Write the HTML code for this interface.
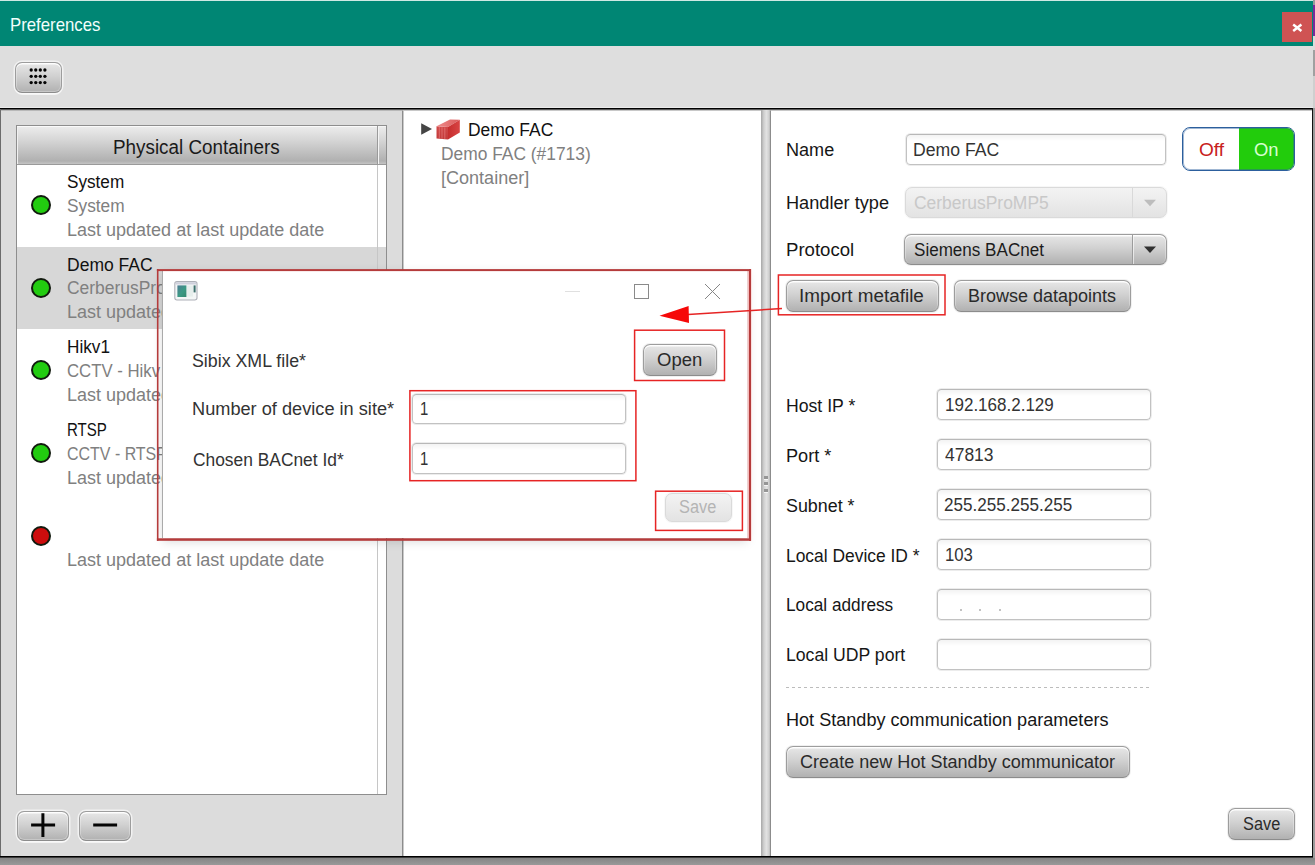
<!DOCTYPE html>
<html><head><meta charset="utf-8"><title>Preferences</title>
<style>
html,body{margin:0;padding:0;width:1315px;height:865px;overflow:hidden;background:#dedede;font-family:"Liberation Sans",sans-serif;}
body{position:relative}
div,span,svg{position:absolute;box-sizing:border-box}
.t{line-height:1;white-space:nowrap;transform-origin:0 0;z-index:5}
#topline{left:0;top:0;width:1313px;height:1px;background:#cfe9e4}
#title{left:0;top:1px;width:1313px;height:45px;background:#008674}
#close{left:1282px;top:12px;width:30px;height:30px;background:#cf5353}
#edgeR{left:1313px;top:0;width:2px;height:865px;background:#9a9a9a}
#edgeR1{left:1313px;top:5px;width:2px;height:31px;background:#7a2a9a}
#edgeR2{left:1313px;top:36px;width:2px;height:14px;background:#dcdcdc}
#edgeR3{left:1313px;top:50px;width:2px;height:26px;background:#a0a0a0}
#edgeR4{left:1313px;top:76px;width:2px;height:32px;background:#cfcfcf}
#hl107{left:0;top:107px;width:1313px;height:1px;background:#ececec}
#bl108{left:0;top:108px;width:1313px;height:1px;background:#000}
#bl109{left:0;top:109px;width:1313px;height:1px;background:#5a5a5a}
#bl110{left:0;top:110px;width:1313px;height:1px;background:#b8b8b8}
#leftbg{left:0;top:111px;width:402px;height:745px;background:#dcdcdc}
#edgeL{left:0;top:109px;width:1px;height:748px;background:#6c6c6c}
#edgeRb{left:1312px;top:108px;width:1px;height:749px;background:#111}
#botline{left:0;top:856px;width:1313px;height:1px;background:#000}
#botline2{left:0;top:857px;width:1313px;height:1px;background:#3c3c3c}
#botbg{left:0;top:858px;width:1315px;height:7px;background:linear-gradient(#858585,#999)}
/* modena-like button */
.btn{border:1px solid #9d9d9d;border-bottom-color:#8c8c8c;border-radius:7px;background:linear-gradient(#e7e7e7 0%,#d1d1d1 45%,#b1b1b1 100%);box-shadow:0 0 0 1px rgba(150,150,150,.14), inset 0 -1px 0 0 rgba(0,0,0,.10), inset 0 1.5px 0 0 rgba(255,255,255,.92), inset 0 0 0 1px rgba(255,255,255,.28)}
.btn.ong{box-shadow:0 0 0 1.5px rgba(255,255,255,.62), 0 2px 0 0 rgba(255,255,255,.5), inset 0 1.5px 0 0 rgba(255,255,255,.92), inset 0 0 0 1px rgba(255,255,255,.28)}
.btn.dis{border-color:#dadada;background:linear-gradient(#f3f3f3,#e3e3e3);box-shadow:0 0 0 1px rgba(200,200,200,.15)}
.fld{border:1px solid #c2c2c2;border-top-color:#b8b8b8;border-radius:4.5px;background:linear-gradient(#f3f3f3 0,#fff 6px);box-shadow:0 0 0 1px rgba(170,170,170,.22)}
#list{left:16px;top:125px;width:371px;height:670px;border:1px solid #8e8e8e;background:#fff}
#lhead{left:0;top:0;width:369px;height:38.5px;background:linear-gradient(#ededed 0%,#d4d4d4 40%,#b0b0b0 92%,#c4c4c4 100%);border-bottom:1px solid #9a9a9a;box-shadow:inset 0 1px 0 #fafafa, inset 1px 0 0 #f0f0f0}
#lcorner{left:360px;top:0;width:9px;height:38px;border-left:1px solid #9a9a9a;background:linear-gradient(#ededed 0%,#d4d4d4 40%,#b0b0b0 92%,#c4c4c4 100%);box-shadow:inset 1px 1px 0 #f4f4f4}
#lsel{left:0;top:120.6px;width:369px;height:82.7px;background:#d7d7d7}
#lsb{left:360px;top:38px;width:9px;height:630px;background:transparent;border-left:1px solid #c6c6c6}
.dot{width:20px;height:20px;border-radius:50%;border:2px solid #111a0e;left:30.4px}
.g{background:#22cc10}.r{background:#cc0d0d}
#mid{left:402px;top:110px;width:359px;height:746px;background:#fff;border-left:1px solid #8c8c8c;border-top:1px solid #c8c8c8;box-shadow:inset 1px 0 0 #cacaca}
#split{left:761px;top:110px;width:9px;height:746px;background:linear-gradient(90deg,#a8a8a8 0,#b4b4b4 11%,#cecece 30%,#e2e2e2 60%,#d2d2d2 85%,#bcbcbc 100%)}
#right{left:770px;top:110px;width:542px;height:746px;background:#fff;border-left:1px solid #8c8c8c;border-top:1px solid #c8c8c8}
.grip{left:764px;width:4px;height:3px;background:#969696;box-shadow:0 1px 0 rgba(255,255,255,.7)}
#dash{left:786px;top:687.3px;width:364px;height:1px;background:repeating-linear-gradient(90deg,#bcbcbc 0,#bcbcbc 3.2px,transparent 3.2px,transparent 6px)}
#toggle{left:1182px;top:127px;width:113px;height:44px;border:1px solid #2c5f9d;border-radius:8px;background:#fff;overflow:hidden}
#toggle b{position:absolute;left:0;top:0;width:111px;height:42px;border-radius:7px;box-shadow:inset 0 0 0 1px rgba(44,95,157,.45);display:block}
#toggle i{position:absolute;left:56px;top:0;width:56px;height:42px;background:#22cc0c;display:block}
.sep{width:1px}
/* dialog */
#dshadow{left:164px;top:273px;width:582px;height:265px;box-shadow:0 2px 10px 1px rgba(0,0,0,.17);z-index:19}
#dlg{left:162px;top:271px;width:586px;height:267px;background:#fff;box-shadow:inset 1px 0 0 #aaa, inset -1px 0 0 #e8dada;z-index:20}
#anno{left:0;top:0;width:1315px;height:865px;z-index:25;pointer-events:none}
.z30{z-index:30}

</style></head>
<body>
<div id="topline"></div><div id="title"></div>
<div id="close"><svg width="30" height="30" viewBox="0 0 30 30" style="left:0;top:0"><path d="M11.2 12.6 L19.4 18.9 M19.4 12.6 L11.2 18.9" stroke="#fff" stroke-width="2.5" fill="none"/></svg></div>
<div id="edgeR"></div><div id="edgeR1"></div><div id="edgeR2"></div><div id="edgeR3"></div><div id="edgeR4"></div>
<div class="btn ong" style="left:15px;top:62px;width:47px;height:31px"></div>
<svg width="20" height="18" viewBox="0 0 20 18" style="left:29px;top:67px;z-index:3"><g fill="#050505">
<circle cx="2.2" cy="3" r="1.65"/><circle cx="6.75" cy="3" r="1.65"/><circle cx="11.3" cy="3" r="1.65"/><circle cx="15.9" cy="3" r="1.65"/>
<circle cx="2.2" cy="9.3" r="1.65"/><circle cx="6.75" cy="9.3" r="1.65"/><circle cx="11.3" cy="9.3" r="1.65"/><circle cx="15.9" cy="9.3" r="1.65"/>
<circle cx="2.2" cy="15.6" r="1.65"/><circle cx="6.75" cy="15.6" r="1.65"/><circle cx="11.3" cy="15.6" r="1.65"/><circle cx="15.9" cy="15.6" r="1.65"/></g></svg>
<div id="hl107"></div><div id="bl108"></div><div id="bl109"></div><div id="bl110"></div>
<div id="leftbg"></div><div id="edgeL"></div>
<div id="list">
 <div id="lsel"></div>
 <div id="lsb"></div>
 <div id="lhead"></div><div id="lcorner"></div>
 <div class="dot g" style="top:69.0px;left:13.8px"></div>
 <div class="dot g" style="top:151.7px;left:13.8px"></div>
 <div class="dot g" style="top:234.3px;left:13.8px"></div>
 <div class="dot g" style="top:317.0px;left:13.8px"></div>
 <div class="dot r" style="top:399.7px;left:13.8px"></div>
</div>
<div class="btn ong" style="left:17px;top:811px;width:52px;height:30px"></div>
<div class="btn ong" style="left:79px;top:811px;width:52px;height:30px"></div>
<svg width="120" height="30" viewBox="0 0 120 30" style="left:16px;top:810px;z-index:3"><path d="M15.1 15.1 H39.1 M26.9 3.2 V27 M77.2 15.1 H101.1" stroke="#050505" stroke-width="3" fill="none"/></svg>
<div id="mid"></div><div id="split"></div><div id="right"></div>
<div class="grip" style="top:476px"></div><div class="grip" style="top:482px"></div><div class="grip" style="top:489px"></div>
<div id="edgeRb"></div>
<div id="botline"></div><div id="botline2"></div><div id="botbg"></div>
<!-- tree -->
<svg width="46" height="26" viewBox="0 0 46 26" style="left:418px;top:116px;z-index:3">
 <defs><linearGradient id="ct" x1="0" y1="0" x2="1" y2="0"><stop offset="0" stop-color="#f08c8c"/><stop offset="1" stop-color="#d95a5a"/></linearGradient>
 <linearGradient id="cs" x1="0" y1="0" x2="1" y2="0"><stop offset="0" stop-color="#c62e2e"/><stop offset="1" stop-color="#d84444"/></linearGradient>
 <linearGradient id="cf" x1="0" y1="0" x2="0" y2="1"><stop offset="0" stop-color="#d24848"/><stop offset="1" stop-color="#c23a3a"/></linearGradient></defs>
 <path d="M3.2 7.2 L14 13 L3.2 18.8 Z" fill="#454545"/>
 <path d="M18.5 10.3 L30 11 L30 23.4 L18.5 22.6 Z" fill="url(#cf)"/>
 <path d="M18.5 10.3 L32 3.6 L41.8 3.8 L30 11 Z" fill="url(#ct)"/>
 <path d="M30 11 L41.8 3.8 L41.8 16.6 L30 23.4 Z" fill="url(#cs)"/>
 <path d="M21.3 11 V22.5 M24 11.2 V22.8 M26.8 11.4 V23" stroke="#e88080" stroke-width=".9" opacity=".75"/>
</svg>
<!-- right controls -->
<div class="fld" style="left:905.5px;top:134px;width:260px;height:31px"></div>
<div id="toggle"><i></i><b></b></div>
<div class="btn dis" style="left:904.5px;top:187px;width:262px;height:31px"></div>
<div class="sep" style="left:1132px;top:188px;height:29px;background:#d9d9d9"></div>
<svg width="14" height="8" viewBox="0 0 14 8" style="left:1142.5px;top:199px"><path d="M1 .8 H13 L7 7.2 Z" fill="#bdbdbd"/></svg>
<div class="btn" style="left:904px;top:233.5px;width:262.5px;height:31px"></div>
<div class="sep" style="left:1131.5px;top:235px;height:28.5px;background:#9c9c9c;box-shadow:1px 0 0 rgba(255,255,255,.6)"></div>
<svg width="14" height="8" viewBox="0 0 14 8" style="left:1142.5px;top:246px"><path d="M1 .4 H13 L7 7 Z" fill="#303030"/></svg>
<div class="btn" style="left:786px;top:280px;width:152.5px;height:31.5px"></div>
<div class="btn" style="left:954px;top:280px;width:176.5px;height:31.5px"></div>
<div class="fld" style="left:936.5px;top:389px;width:214.5px;height:31px"></div>
<div class="fld" style="left:936.5px;top:439px;width:214.5px;height:31px"></div>
<div class="fld" style="left:936.5px;top:489px;width:214.5px;height:31px"></div>
<div class="fld" style="left:936.5px;top:539px;width:214.5px;height:31px"></div>
<div class="fld" style="left:936.5px;top:589px;width:214.5px;height:31px"></div>
<div class="fld" style="left:936.5px;top:639px;width:214.5px;height:31px"></div>
<div style="left:960px;top:609px;width:2px;height:2px;background:#c2c2c2"></div>
<div style="left:979px;top:609px;width:2px;height:2px;background:#c2c2c2"></div>
<div style="left:998.5px;top:609px;width:2px;height:2px;background:#c2c2c2"></div>
<div id="dash"></div>
<div class="btn" style="left:786px;top:746px;width:343.5px;height:31.5px"></div>
<div class="btn" style="left:1228px;top:808px;width:67px;height:31.5px"></div>
<!-- dialog -->
<div id="dshadow"></div>
<div id="dlg">
 <svg width="24" height="20" viewBox="0 0 24 20" style="left:11.5px;top:10px">
  <defs><linearGradient id="tg" x1="0" y1="0" x2="1" y2="1"><stop offset="0" stop-color="#4d7b93"/><stop offset=".55" stop-color="#3b9a84"/><stop offset="1" stop-color="#35886f"/></linearGradient></defs>
  <rect x=".8" y=".6" width="22.2" height="18.4" rx="2.2" fill="#f3f6f6" stroke="#aeb0b8" stroke-width="1.1"/>
  <rect x="1.6" y="1.3" width="20.6" height="2.2" fill="#cfd0dc"/>
  <rect x="3.4" y="4.4" width="9" height="11.6" fill="url(#tg)"/>
  <rect x="13" y="4.6" width="6" height="11" fill="#e6eeec"/>
  <rect x="19.6" y="4.4" width="2" height="7" fill="#3c6f6c"/>
 </svg>
 <div style="left:403px;top:20px;width:15px;height:1px;background:#e0e0e0"></div>
 <div style="left:472px;top:13px;width:15px;height:15px;border:1px solid #8a8a8a"></div>
 <svg width="17" height="17" viewBox="0 0 17 17" style="left:541.5px;top:12px"><path d="M1 1 L16 16 M16 1 L1 16" stroke="#868686" stroke-width="1" fill="none"/></svg>
 <div class="btn" style="left:481px;top:73px;width:74px;height:31.5px"></div>
 <div class="fld" style="left:250px;top:122.5px;width:214px;height:30.5px"></div>
 <div class="fld" style="left:250px;top:172px;width:214px;height:31px"></div>
 <div class="btn dis" style="left:503px;top:222px;width:67px;height:29px"></div>
</div>
<svg id="anno" width="1315" height="865" viewBox="0 0 1315 865">
 <rect x="747.7" y="271" width="1.4" height="267.3" fill="#f4bcbc"/><rect x="751" y="269.1" width="1" height="271.7" fill="#fbe0e0"/><g fill="#b53b3b"><rect x="156.9" y="269.1" width="594.1" height="2"/><rect x="156.9" y="269.1" width="1.6" height="271.7"/><rect x="749" y="269.1" width="2" height="271.7"/><rect x="156.9" y="538.3" width="594.1" height="2.5"/></g>
 <g fill="none" stroke="#e62424" stroke-width="1.5">
  <rect x="634.6" y="330.2" width="89.9" height="50.3"/>
  <rect x="409.9" y="390.7" width="226" height="90"/>
  <rect x="655.6" y="491.2" width="86.8" height="39.2"/>
  <rect x="778.4" y="275" width="166.6" height="39.8"/>
  <path d="M782 308.5 L688 314.6"/>
 </g>
 <path d="M659.5 315.8 L688.6 306 L689 323 Z" fill="#f60808"/>
</svg>

<span class="t" style="left:9.81px;top:16.00px;font-size:18.5px;color:#f2fffc;transform:scaleX(0.9066);">Preferences</span>
<span class="t" style="left:113.33px;top:138.00px;font-size:19.5px;color:#1a1a1a;transform:scaleX(0.9667);">Physical Containers</span>
<span class="t" style="left:67.05px;top:174.00px;font-size:17.5px;color:#111;transform:scaleX(0.9800);">System</span>
<span class="t" style="left:66.64px;top:198.00px;font-size:17.5px;color:#808080;transform:scaleX(0.9871);">System</span>
<span class="t" style="left:66.78px;top:222.00px;font-size:17.5px;color:#808080;transform:scaleX(1.0290);">Last updated at last update date</span>
<span class="t" style="left:66.72px;top:257.00px;font-size:17.5px;color:#111;transform:scaleX(1.0008);">Demo FAC</span>
<span class="t" style="left:66.71px;top:280.00px;font-size:17.5px;color:#808080;transform:scaleX(0.9966);">CerberusProMP5</span>
<span class="t" style="left:66.78px;top:304.00px;font-size:17.5px;color:#808080;transform:scaleX(1.0290);">Last updated at last update date</span>
<span class="t" style="left:66.75px;top:339.00px;font-size:17.5px;color:#111;transform:scaleX(0.9810);">Hikv1</span>
<span class="t" style="left:66.76px;top:363.00px;font-size:17.5px;color:#808080;transform:scaleX(0.9570);">CCTV - Hikv</span>
<span class="t" style="left:66.78px;top:387.00px;font-size:17.5px;color:#808080;transform:scaleX(1.0290);">Last updated at last update date</span>
<span class="t" style="left:66.93px;top:422.00px;font-size:17.5px;color:#111;transform:scaleX(0.8602);">RTSP</span>
<span class="t" style="left:66.81px;top:446.00px;font-size:17.5px;color:#808080;transform:scaleX(0.9121);">CCTV - RTSP</span>
<span class="t" style="left:66.78px;top:470.00px;font-size:17.5px;color:#808080;transform:scaleX(1.0290);">Last updated at last update date</span>
<span class="t" style="left:66.78px;top:552.00px;font-size:17.5px;color:#808080;transform:scaleX(1.0290);">Last updated at last update date</span>
<span class="t" style="left:467.93px;top:122.00px;font-size:17.5px;color:#111;transform:scaleX(0.9960);">Demo FAC</span>
<span class="t" style="left:441.14px;top:146.00px;font-size:17.5px;color:#808080;transform:scaleX(0.9933);">Demo FAC (#1713)</span>
<span class="t" style="left:441.24px;top:170.00px;font-size:17.5px;color:#808080;transform:scaleX(1.0309);">[Container]</span>
<span class="t" style="left:785.78px;top:142.00px;font-size:17.5px;color:#161616;transform:scaleX(1.0335);">Name</span>
<span class="t" style="left:785.77px;top:195.00px;font-size:17.5px;color:#161616;transform:scaleX(1.0379);">Handler type</span>
<span class="t" style="left:785.73px;top:242.00px;font-size:17.5px;color:#161616;transform:scaleX(1.0629);">Protocol</span>
<span class="t" style="left:785.81px;top:398.00px;font-size:17.5px;color:#161616;transform:scaleX(1.0075);">Host IP *</span>
<span class="t" style="left:785.77px;top:448.00px;font-size:17.5px;color:#161616;transform:scaleX(1.0357);">Port *</span>
<span class="t" style="left:786.10px;top:498.00px;font-size:17.5px;color:#161616;transform:scaleX(1.0212);">Subnet *</span>
<span class="t" style="left:785.83px;top:548.00px;font-size:17.5px;color:#161616;transform:scaleX(0.9949);">Local Device ID *</span>
<span class="t" style="left:785.85px;top:597.00px;font-size:17.5px;color:#161616;transform:scaleX(0.9835);">Local address</span>
<span class="t" style="left:785.81px;top:647.00px;font-size:17.5px;color:#161616;transform:scaleX(1.0075);">Local UDP port</span>
<span class="t" style="left:785.78px;top:712.00px;font-size:17.5px;color:#161616;transform:scaleX(1.0329);">Hot Standby communication parameters</span>
<span class="t" style="left:912.91px;top:142.00px;font-size:17.5px;color:#333;transform:scaleX(1.0081);">Demo FAC</span>
<span class="t" style="left:914.21px;top:195.00px;font-size:17.5px;color:#c8c8c8;transform:scaleX(0.9966);">CerberusProMP5</span>
<span class="t" style="left:914.46px;top:242.00px;font-size:17.5px;color:#1c1c1c;transform:scaleX(0.9749);">Siemens BACnet</span>
<span class="t" style="left:944.85px;top:397.00px;font-size:17.5px;color:#333;transform:scaleX(0.9721);">192.168.2.129</span>
<span class="t" style="left:944.55px;top:447.00px;font-size:17.5px;color:#333;transform:scaleX(0.9971);">47813</span>
<span class="t" style="left:944.34px;top:497.00px;font-size:17.5px;color:#333;transform:scaleX(0.9754);">255.255.255.255</span>
<span class="t" style="left:945.18px;top:547.00px;font-size:17.5px;color:#333;transform:scaleX(0.9547);">103</span>
<span class="t" style="left:799.44px;top:288.00px;font-size:17.5px;color:#2a2a2a;transform:scaleX(1.0790);">Import metafile</span>
<span class="t" style="left:968.08px;top:288.00px;font-size:17.5px;color:#2a2a2a;transform:scaleX(1.0277);">Browse datapoints</span>
<span class="t" style="left:800.08px;top:754.00px;font-size:17.5px;color:#2a2a2a;transform:scaleX(1.0317);">Create new Hot Standby communicator</span>
<span class="t" style="left:1242.61px;top:816.00px;font-size:17.5px;color:#2a2a2a;transform:scaleX(0.9339);">Save</span>
<span class="t" style="left:1198.73px;top:142.00px;font-size:17.5px;color:#c8201c;transform:scaleX(1.0899);">Off</span>
<span class="t" style="left:1253.77px;top:142.00px;font-size:17.5px;color:#d8ffd0;transform:scaleX(1.0531);">On</span>
<span class="t" style="left:192.41px;top:353.00px;font-size:17.5px;color:#333;transform:scaleX(1.0162);z-index:30">Sibix XML file*</span>
<span class="t" style="left:192.27px;top:401.00px;font-size:17.5px;color:#333;transform:scaleX(1.0390);z-index:30">Number of device in site*</span>
<span class="t" style="left:192.72px;top:452.00px;font-size:17.5px;color:#333;transform:scaleX(0.9928);z-index:30">Chosen BACnet Id*</span>
<span class="t" style="left:420.42px;top:401.00px;font-size:17.5px;color:#333;transform:scaleX(0.8500);z-index:30">1</span>
<span class="t" style="left:420.42px;top:451.00px;font-size:17.5px;color:#333;transform:scaleX(0.8500);z-index:30">1</span>
<span class="t" style="left:657.47px;top:352.00px;font-size:17.5px;color:#2a2a2a;transform:scaleX(1.0569);z-index:30">Open</span>
<span class="t" style="left:679.41px;top:499.00px;font-size:17.5px;color:#b4b4b4;transform:scaleX(0.9339);z-index:30">Save</span>
</body></html>
